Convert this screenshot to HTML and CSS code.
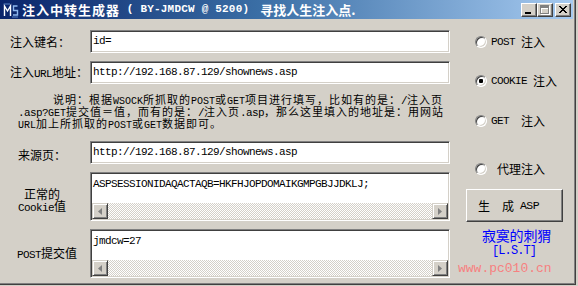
FILE: index.html
```html
<!DOCTYPE html>
<html lang="zh-CN">
<head>
<meta charset="utf-8">
<title>注入中转生成器</title>
<link rel="stylesheet" href="styles.css">
</head>
<body>
<div class="window">
  <div class="titlebar">
    <svg class="appicon" width="16" height="16" viewBox="0 0 16 16">
      <path d="M1.5 14V4l3 5 3-5v10" stroke="#ffffff" fill="none" stroke-width="1.4"/>
      <path d="M14.5 4h-4v4.5h4V13h-4.5" stroke="#8fb8ee" fill="none" stroke-width="1.4"/>
      <path d="M1 2h6M9 15h6" stroke="#5d86c8" stroke-width="1"/>
    </svg>
    <div class="title"><span class="tc">注入中转生成器</span><span class="tm"> ( BY-JMDCW @ 5200)</span><span class="tc tc2">寻找人生注入点.</span></div>
    <div class="tbtns">
      <span class="tbtn"><svg width="6" height="2" viewBox="0 0 6 2" class="g-min"><rect width="6" height="2" fill="#000"/></svg></span>
      <span class="tbtn"><svg width="10" height="10" viewBox="0 0 10 10" shape-rendering="crispEdges"><path d="M1 1h9v9H1z M2 4v5h7V4z" fill="#fff" fill-rule="evenodd"/><path d="M0 0h9v9H0z M1 3v5h7V3z" fill="#808080" fill-rule="evenodd"/></svg></span>
      <span class="tbtn tclose"><svg width="8" height="7" viewBox="0 0 8 7" shape-rendering="crispEdges"><path d="M0 0h2v1H0z M6 0h2v1H6z M1 1h2v1H1z M5 1h2v1H5z M2 2h4v1H2z M3 3h2v1H3z M2 4h4v1H2z M1 5h2v1H1z M5 5h2v1H5z M0 6h2v1H0z M6 6h2v1H6z" fill="#000"/></svg></span>
    </div>
  </div>

  <div class="client">
    <div class="form">
      <div class="row r1">
        <div class="lbl">注入键名：</div>
        <div class="field"><span class="m">id=</span></div>
      </div>
      <div class="row r2">
        <div class="lbl">注入<span class="l">URL</span>地址：</div>
        <div class="field"><span class="m">http://192.168.87.129/shownews.asp</span></div>
      </div>
      <div class="desc">说明：根据<span class="s">WSOCK</span>所抓取的<span class="s">POST</span>或<span class="s">GET</span>项目进行填写，比如有的是：<span class="l">/</span>注入页<br><span class="l">.asp?</span><span class="s">GET</span>提交值＝值，而有的是：<span class="l">/</span>注入页<span class="l">.asp</span>，那么这里填入的地址是：用网站<br><span class="s">URL</span>加上所抓取的<span class="s">POST</span>或<span class="s">GET</span>数据即可。</div>
      <div class="row r3">
        <div class="lbl lbl3">来源页：</div>
        <div class="field"><span class="m">http://192.168.87.129/shownews.asp</span></div>
      </div>
      <div class="row rta r4">
        <div class="lbl lbl4">正常的<br><span class="l">Cookie</span>值</div>
        <div class="area">
          <div class="atext"><span class="m">ASPSESSIONIDAQACTAQB=HKFHJOPDOMAIKGMPGBJJDKLJ;</span></div>
          <div class="hscroll">
            <span class="sbtn"><svg width="4" height="7" viewBox="0 0 4 7"><path d="M4 0v7L0 3.5z" fill="#808080"/></svg></span>
            <span class="track"></span>
            <span class="sbtn"><svg width="4" height="7" viewBox="0 0 4 7"><path d="M0 0v7l4-3.5z" fill="#808080"/></svg></span>
          </div>
        </div>
      </div>
      <div class="row rta r5">
        <div class="lbl lbl5"><span class="l">POST</span>提交值</div>
        <div class="area">
          <div class="atext"><span class="m">jmdcw=27</span></div>
          <div class="hscroll">
            <span class="sbtn"><svg width="4" height="7" viewBox="0 0 4 7"><path d="M4 0v7L0 3.5z" fill="#808080"/></svg></span>
            <span class="track"></span>
            <span class="sbtn"><svg width="4" height="7" viewBox="0 0 4 7"><path d="M0 0v7l4-3.5z" fill="#808080"/></svg></span>
          </div>
        </div>
      </div>
    </div>

    <div class="side">
      <div class="opt o1"><span class="radio"></span><span class="otext"><span class="l">POST</span><span class="sp1"></span>注入</span></div>
      <div class="opt o2"><span class="radio checked"></span><span class="otext"><span class="l">COOKIE</span><span class="sp1"></span>注入</span></div>
      <div class="opt o3"><span class="radio"></span><span class="otext"><span class="l">GET</span><span class="sp2"></span>注入</span></div>
      <div class="opt o4"><span class="radio"></span><span class="otext"><span class="sp1"></span>代理注入</span></div>
      <div class="btn"><span>生</span><span class="sp2"></span><span>成</span><span class="sp1"></span><span class="l">ASP</span></div>
      <div class="credit c1">寂寞的刺猬</div>
      <div class="credit c2">[L.S.T]</div>
      <div class="credit c3">www.pc010.cn</div>
    </div>
  </div>
</div>
</body>
</html>
```

FILE: styles.css
```css
* { box-sizing: border-box; }
html, body { margin: 0; padding: 0; }
body {
  width: 578px;
  height: 286px;
  overflow: hidden;
  background: #d4d0c8;
  font: 12px "Noto Sans CJK SC", sans-serif;
  color: #000;
}

.window {
  width: 576px;
  height: 285px;
  background: #d4d0c8;
  border-right: 1px solid #404040;
  border-bottom: 1px solid #404040;
  box-shadow: inset -1px -1px #808080;
  padding-right: 2px;
  display: flex;
  flex-direction: column;
}

/* title bar */
.titlebar {
  height: 19px;
  flex: none;
  display: flex;
  align-items: center;
  background: linear-gradient(to right, #0a246a 0%, #3a6ea5 45%, #a6caf0 100%);
  color: #fff;
}
.appicon { margin-left: 3px; flex: none; }
.title {
  margin-left: 3px;
  display: flex;
  align-items: center;
  white-space: pre;
  font-weight: bold;
  flex: 1;
}
.tc { font-size: 13px; letter-spacing: 1px; line-height: 19px; }
.tc2 { letter-spacing: 0; margin-left: 11px; }
.tm {
  font-family: "Liberation Mono", monospace;
  font-size: 11px;
  letter-spacing: 0.2px;
  line-height: 19px;
}
.tbtns { display: flex; align-items: center; margin-right: 2px; }
.tbtn {
  width: 16px;
  height: 14px;
  background: #d4d0c8;
  border: 1px solid;
  border-color: #fff #404040 #404040 #fff;
  box-shadow: inset -1px -1px #808080;
  display: flex;
  align-items: center;
  justify-content: center;
}
.tbtn .g-min { margin-top: 6px; margin-left: -2px; }
.tclose { margin-left: 2px; }

/* client */
.client { display: flex; flex: 1; }
.form { width: 452px; flex: none; padding-top: 11px; }

.l, .m, .s {
  font-family: "Liberation Mono", monospace;
  font-size: 11px;
  letter-spacing: -0.6px;
}
.s { font-size: 10px; letter-spacing: 0; }

.row { display: flex; align-items: center; height: 23px; }
.r2 { margin-top: 8px; }
.r3 { margin-top: 14px; }
.r4 { margin-top: 8px; }
.r5 { margin-top: 8px; }
.rta { height: 49px; }

.lbl { width: 90px; flex: none; padding-left: 10px; line-height: 14px; white-space: nowrap; }
.lbl3 { padding-left: 18px; margin-top: 5px; }
.lbl4 {
  padding-left: 0;
  width: 90px;
  padding-right: 6px;
  text-align: center;
  font-family: "Liberation Sans", "Noto Sans CJK SC", sans-serif;
  line-height: 12.5px;
  padding-top: 10px;
}
.lbl5 { padding-left: 4px; text-align: center; }

.field, .area {
  width: 360px;
  background: #fff;
  border: 1px solid;
  border-color: #808080 #fff #fff #808080;
  box-shadow: inset 1px 1px #404040, inset -1px -1px #d4d0c8;
}
.field {
  height: 23px;
  padding: 1px 0 0 2px;
  line-height: 14px;
  white-space: nowrap;
}
.area {
  height: 49px;
  padding: 1px;
  display: flex;
  flex-direction: column;
}
.atext { flex: 1; padding: 1px 0 0 1px; line-height: 14px; white-space: nowrap; }
.hscroll { height: 16px; display: flex; flex: none; }
.sbtn {
  width: 16px;
  height: 16px;
  flex: none;
  background: #d4d0c8;
  border: 1px solid;
  border-color: #d4d0c8 #404040 #404040 #d4d0c8;
  box-shadow: inset 1px 1px #fff, inset -1px -1px #808080;
  display: flex;
  align-items: center;
  justify-content: center;
}
.track {
  flex: 1;
  background: repeating-conic-gradient(#ffffff 0 25%, #d4d0c8 0 50%) 0 0 / 2px 2px;
}

.desc {
  margin-top: 10px;
  padding-top: 1px;
  padding-left: 18px;
  text-indent: 35px;
  font-family: "Liberation Sans", "Noto Sans CJK SC", sans-serif;
  font-size: 11px;
  letter-spacing: 1px;
  line-height: 11px;
  white-space: nowrap;
  height: 33px;
}

/* right side */
.side { flex: 1; display: flex; flex-direction: column; }
.opt { display: flex; align-items: center; height: 14px; margin-left: 23px; white-space: nowrap; line-height: 14px; }
.o1 { margin-top: 16px; }
.o2 { margin-top: 25px; }
.o3 { margin-top: 26px; }
.o4 { margin-top: 34px; }
.radio {
  width: 12px;
  height: 12px;
  flex: none;
  border-radius: 50%;
  background: #fff;
  border: 1px solid;
  border-color: #808080 #fff #fff #808080;
  box-shadow: inset 1px 1px #404040, inset -1px -1px #d4d0c8;
  display: flex;
  align-items: center;
  justify-content: center;
}
.radio.checked::after {
  content: "";
  width: 4px;
  height: 4px;
  border-radius: 1px;
  background: #000;
}
.otext { margin-left: 4px; display: flex; align-items: center; }
.sp1 { display: inline-block; width: 6px; }
.sp2 { display: inline-block; width: 12px; }

.btn {
  margin-top: 13px;
  margin-left: 14px;
  width: 97px;
  height: 33px;
  display: flex;
  align-items: center;
  padding-left: 11px;
  border: 1px solid;
  border-color: #fff #404040 #404040 #fff;
  box-shadow: inset -1px -1px #808080;
  line-height: 14px;
}
.btn .l { font-size: 11.5px; }

.credit { white-space: nowrap; }
.c1 { margin-top: 6px; padding-left: 30px; color: #0000ff; font-size: 14px; line-height: 14px; letter-spacing: -0.2px; }
.c2 {
  margin-top: 3px;
  padding-left: 40px;
  color: #0000ff;
  font-family: "Liberation Mono", monospace;
  font-size: 12px;
  letter-spacing: -0.9px;
  line-height: 12px;
}
.c3 {
  margin-top: 5px;
  padding-left: 6px;
  color: #f78080;
  font-family: "Liberation Mono", monospace;
  font-size: 13px;
  line-height: 14px;
}
```
